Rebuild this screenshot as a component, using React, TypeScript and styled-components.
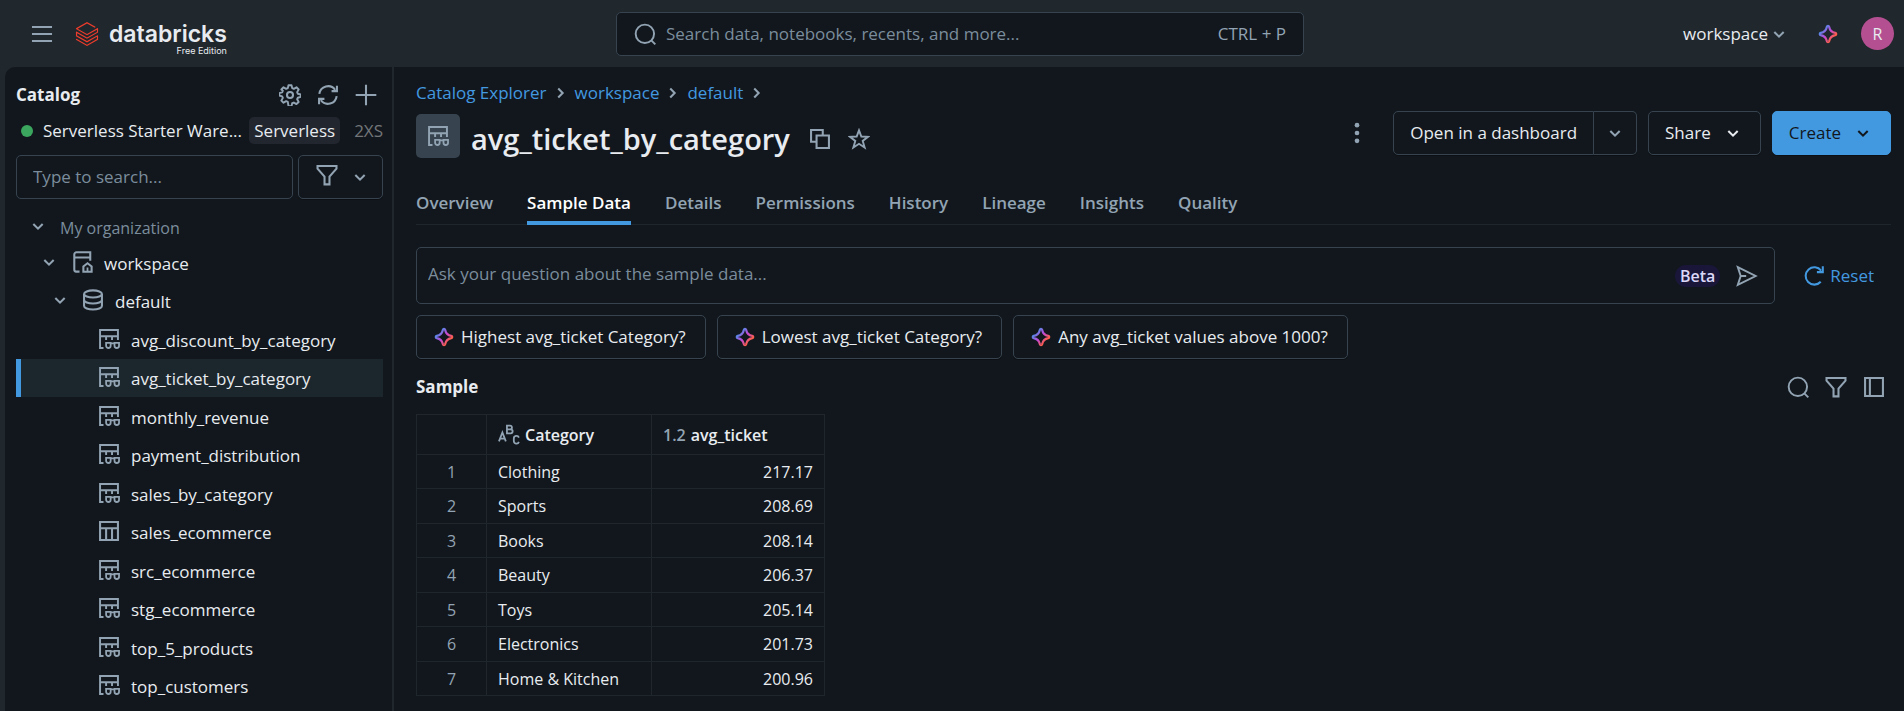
import React from "react";
import styled, { createGlobalStyle, css } from "styled-components";

const color = {
  bar: "#20272d",
  panel: "#12171d",
  line: "#1f272d",
  border: "#37444f",
  text: "#e8ecf0",
  muted: "#92a4b3",
  placeholder: "#7b8d9c",
  blue: "#4299e0",
};

const GlobalStyle = createGlobalStyle`
  *, *::before, *::after { box-sizing: border-box; }
  body {
    margin: 0;
    background: ${color.bar};
    color: ${color.text};
    font-family: "Segoe UI", "Open Sans", "Noto Sans", sans-serif;
    font-size: 17px;
    line-height: 22px;
  }
  button, input { font: inherit; color: inherit; }
  button { cursor: pointer; }
  h1, h2, ul { margin: 0; padding: 0; }
  a { text-decoration: none; }
  svg { display: block; flex: none; }
`;

/* ---------- icons ---------- */

type IconProps = { size?: number; children?: React.ReactNode };

const Icon = ({ size = 22, children }: IconProps) => (
  <svg
    width={size}
    height={size}
    viewBox="0 0 16 16"
    fill="none"
    stroke="currentColor"
    strokeWidth="1.5"
    aria-hidden="true"
  >
    {children}
  </svg>
);

const MenuIcon = () => (
  <Icon>
    <path d="M.7 2.9h14.6M.7 8h14.6M.7 13.1h14.6" />
  </Icon>
);
const SearchIcon = () => (
  <Icon>
    <circle cx="7.9" cy="7.9" r="6.7" strokeWidth="1.4" />
    <path d="m12.6 12.6 2.9 2.9" strokeWidth="1.4" />
  </Icon>
);
const ChevronDown = () => (
  <Icon>
    <path d="m4.6 6.5 3.4 3.4 3.4-3.4" />
  </Icon>
);
const ChevronRight = () => (
  <Icon>
    <path d="M6 4.800 9.200 8l-3.200 3.200" />
  </Icon>
);
const GearIcon = () => (
  <Icon>
    <path
      d="M6.9.9h2.2l.5 2.1 1.2.5 1.9-1.1 1.6 1.6-1.1 1.9.5 1.2 2.1.5v1.8l-2.1.6-.5 1.1 1.1 2-1.6 1.5-1.9-1.1-1.2.5-.5 2.1H6.9L6.4 13l-1.2-.5-1.9 1.1-1.6-1.5 1.1-2-.5-1.1-2.1-.6V6.6l2.1-.5.5-1.2L1.7 4l1.6-1.6 1.9 1.1L6.4 3z"
      strokeWidth="1.4"
      strokeLinejoin="round"
    />
    <circle cx="8" cy="8" r="2.2" />
  </Icon>
);
const RefreshIcon = () => (
  <Icon>
    <path d="M1.7 7.2a6.4 6.4 0 0 1 11.5-3M14.3 8.8a6.4 6.4 0 0 1-11.5 3" />
    <path d="M14.5 1.3v3.9h-3.9M1.5 14.7v-3.9h3.9" />
  </Icon>
);
const PlusIcon = () => (
  <Icon>
    <path d="M8 .5v15M.5 8h15" />
  </Icon>
);
const FilterIcon = () => (
  <Icon>
    <path d="M1.1 1.4h13.8v2L9.8 9.2v5.6H6.2V9.2L1.1 3.4z" />
  </Icon>
);
const CatalogIcon = () => (
  <Icon>
    <path d="M14 7V.9H4a1.6 1.6 0 0 0-1.6 1.6v11.2A1.3 1.3 0 0 0 3.7 15h2.5M2.6 4.7H14" />
    <path d="M9 15.1v-3.9l3-2.3 3 2.3v3.9z" />
    <path d="M12 15v-3" strokeWidth="1.3" />
  </Icon>
);
const DatabaseIcon = () => (
  <Icon>
    <ellipse cx="8" cy="3.6" rx="6.5" ry="2.6" />
    <path d="M1.5 3.6v8.7c0 1.4 2.9 2.6 6.5 2.6s6.5-1.2 6.5-2.6V3.6" />
    <path d="M1.5 8c0 1.4 2.9 2.6 6.5 2.6s6.5-1.2 6.5-2.6" />
  </Icon>
);
const TableIcon = () => (
  <Icon>
    <path d="M1.5 1.5h13v13h-13zM1.5 6h13M5.9 6v8.5M10.2 6v8.5" />
  </Icon>
);
const ViewIcon = () => (
  <Icon>
    <path d="M4 14.5H1.5v-13h13v7.3M1.5 6h13M5.9 6v2.7M10.2 6v2.7" strokeWidth="1.4" />
    <path
      d="M5.9 10.8h3.3v2.1a1.65 1.65 0 0 1-3.3 0zM12 10.8h3.3v2.1a1.65 1.65 0 0 1-3.3 0zM9 11.2h3"
      strokeWidth="1.3"
    />
  </Icon>
);
const CopyIcon = () => (
  <Icon>
    <path d="M5 10H1.5V1.5H10V5M5.5 5.5h9v9h-9z" />
  </Icon>
);
const StarIcon = () => (
  <Icon>
    <path
      d="m8 1.7 1.7 4.5 4.9.2-3.9 3 1.4 4.8L8 11.5l-4.1 2.7 1.4-4.8-3.9-3 4.9-.2z"
      strokeWidth="1.4"
    />
  </Icon>
);
const KebabIcon = () => (
  <Icon>
    <g fill="currentColor" stroke="none">
      <circle cx="8" cy="2.3" r="1.7" />
      <circle cx="8" cy="8" r="1.7" />
      <circle cx="8" cy="13.7" r="1.7" />
    </g>
  </Icon>
);
const SendIcon = () => (
  <Icon>
    <path d="M1.3 1.5 14.3 8l-13 6.5L3.4 8z" strokeWidth="1.4" />
    <path d="M3.4 8h4" />
  </Icon>
);
const ResetIcon = () => (
  <Icon>
    <path d="M12.9 12.2a6.3 6.3 0 1 1 .3-8.1" />
    <path d="M14.4.9v4.3h-4.3" />
  </Icon>
);
const PanelIcon = () => (
  <Icon>
    <path d="M1.5 1.5h13v13h-13zM5 1.5v13" />
  </Icon>
);
const SparkleIcon = () => (
  <Icon>
    <defs>
      <linearGradient id="spark" x1="2" y1="3" x2="13" y2="13" gradientUnits="userSpaceOnUse">
        <stop offset="0.15" stopColor="#4a8fe8" />
        <stop offset="0.5" stopColor="#c048d8" />
        <stop offset="0.85" stopColor="#ff5f46" />
      </linearGradient>
    </defs>
    <path
      stroke="url(#spark)"
      strokeLinejoin="round"
      strokeWidth="1.6"
      d="M8 2c.5 0 .7.3.8.7.5 2.6 1.9 4 4.5 4.5.4.1.7.3.7.8s-.3.7-.7.8c-2.6.5-4 1.9-4.5 4.5-.1.4-.3.7-.8.7s-.7-.3-.8-.7c-.5-2.6-1.9-4-4.5-4.5C2.300 8.700 2 8.500 2 8s.3-.7.7-.8c2.6-.5 4-1.9 4.5-4.5.1-.4.3-.7.8-.7z"
    />
  </Icon>
);
const TextTypeIcon = () => (
  <Icon>
    <g strokeWidth="1.3">
      <path d="m.7 12.6 2.5-6.4 2.5 6.4M1.5 10.7h3.4" />
      <path d="M6.5 1.2h2.3a1.35 1.35 0 0 1 0 2.7H6.5zM6.5 3.9h2.7a1.45 1.45 0 0 1 0 2.9H6.5z" />
      <path d="M15.2 9.9a1.9 1.9 0 0 0-3.7.6v1.9a1.9 1.9 0 0 0 3.7.6" />
    </g>
  </Icon>
);
const BricksLogo = () => (
  <svg width="24" height="24" viewBox="0 0 24 24" fill="#ee3d2c" aria-hidden="true">
    <path d="M.95 14.184 12 20.403l9.919-5.55v2.21L12 22.662l-10.484-5.96-.565.308v.77L12 24l11.05-6.218v-4.317l-.515-.309L12 19.118l-9.867-5.653v-2.21L12 16.805l11.05-6.218V6.32l-.515-.308L12 11.974 2.647 6.681 12 1.388l7.76 4.368.668-.411v-.566L12 0 .95 6.27v.72L12 13.207l9.919-5.55v2.26L12 15.52 1.516 9.56l-.565.308Z" />
  </svg>
);

/* ---------- shared controls ---------- */

const IconButton = styled.button`
  display: flex;
  align-items: center;
  justify-content: center;
  padding: 0;
  border: 0;
  background: none;
  color: ${color.muted};
`;

const Button = styled.button<{ $primary?: boolean }>`
  display: flex;
  align-items: center;
  height: 44px;
  padding: 0 16px;
  border: 1px solid ${color.border};
  border-radius: 5px;
  background: transparent;
  box-shadow: 0 1px 0 rgba(0, 0, 0, 0.3);
  white-space: nowrap;
  ${(p) =>
    p.$primary &&
    css`
      border-color: ${color.blue};
      background: ${color.blue};
      color: ${color.panel};
    `}
`;

const FieldBox = styled.label<{ $height?: number }>`
  display: flex;
  align-items: center;
  min-width: 0;
  height: ${(p) => p.$height ?? 44}px;
  border: 1px solid ${color.border};
  border-radius: 5px;
  background: ${color.panel};
  color: ${color.muted};
`;

const TextInput = styled.input`
  flex: 1;
  min-width: 0;
  padding: 0;
  border: 0;
  outline: 0;
  background: none;
  color: ${color.text};
  &::placeholder {
    color: ${color.placeholder};
    opacity: 1;
  }
`;

/* ---------- top bar ---------- */

const Page = styled.div`
  display: flex;
  flex-direction: column;
  min-height: 100vh;
`;

const TopBar = styled.header`
  display: grid;
  grid-template-columns: 1fr minmax(0, 688px) 1fr;
  align-items: center;
  height: 67px;
  padding: 0 10px 0 26px;
`;

const BarStart = styled.div`
  display: flex;
  align-items: center;
  gap: 17px;
`;

const MenuButton = styled(IconButton)`
  width: 32px;
  height: 34px;
`;

const Brand = styled.a`
  display: flex;
  align-items: center;
  gap: 10px;
  color: ${color.text};
`;

const BrandText = styled.span`
  display: flex;
  flex-direction: column;
  align-items: flex-end;
  padding-top: 13px;
  font-family: Inter, sans-serif;
`;

const BrandName = styled.span`
  font-size: 23px;
  font-weight: 600;
  line-height: 22px;
`;

const BrandEdition = styled.span`
  font-size: 9px;
  line-height: 12px;
`;

const GlobalSearch = styled(FieldBox)`
  gap: 10px;
  padding: 0 17px;
`;

const BarEnd = styled.div`
  display: flex;
  align-items: center;
  justify-content: flex-end;
  gap: 22px;
`;

const WorkspaceButton = styled(IconButton)`
  margin-right: 5px;
  color: ${color.text};
  svg {
    color: ${color.muted};
  }
`;

const Avatar = styled.button`
  width: 33px;
  height: 33px;
  padding: 0;
  border: 0;
  border-radius: 50%;
  background: #b45091;
  font-size: 16px;
`;

/* ---------- sidebar ---------- */

const Body = styled.div`
  display: flex;
  flex: 1;
  gap: 2px;
  padding-left: 5px;
`;

const Sidebar = styled.aside`
  flex: none;
  width: 387px;
  padding: 17px 9px 0 11px;
  border-top-left-radius: 10px;
  background: ${color.panel};
`;

const SidebarHeader = styled.div`
  display: flex;
  align-items: center;
  justify-content: space-between;
  padding-right: 6px;
`;

const Heading = styled.h2`
  font-size: 17px;
  font-weight: 700;
  line-height: 22px;
`;

const Tools = styled.div`
  display: flex;
  gap: 16px;
`;

const Warehouse = styled.div`
  display: flex;
  align-items: center;
  gap: 10px;
  margin: 11px 0;
  padding-left: 5px;
  line-height: 27px;
  white-space: nowrap;
`;

const StatusDot = styled.span`
  flex: none;
  width: 12px;
  height: 12px;
  border-radius: 50%;
  background: #3ba65e;
`;

const WarehouseName = styled.span`
  flex: 1;
  min-width: 0;
`;

const Tag = styled.span`
  margin-right: 4px;
  padding: 0 5px;
  border-radius: 5px;
  background: #22272f;
`;

const Size = styled.span`
  color: #737679;
`;

const SearchRow = styled.div`
  display: flex;
  gap: 5px;
`;

const TreeSearch = styled(FieldBox)`
  flex: 1;
  padding: 0 16px;
`;

const FilterButton = styled(Button)`
  justify-content: center;
  gap: 11px;
  width: 85px;
  padding: 0 0 0 5px;
  color: ${color.muted};
  svg:first-child {
    margin-bottom: 5px;
  }
`;

const Tree = styled.ul`
  margin-top: 12px;
  list-style: none;
`;

const TreeRow = styled.button<{ $indent: number; $selected?: boolean; $root?: boolean }>`
  display: flex;
  align-items: center;
  gap: 11px;
  width: 100%;
  height: ${(p) => (p.$root ? 34 : 38)}px;
  padding: 0 0 0 ${(p) => p.$indent}px;
  border: 0;
  background: ${(p) => (p.$selected ? "#1c262d" : "none")};
  box-shadow: ${(p) => (p.$selected ? `inset 5px 0 ${color.blue}` : "none")};
  color: ${(p) => (p.$root ? color.placeholder : color.text)};
  font-size: ${(p) => (p.$root ? 16 : 17)}px;
  text-align: left;
  svg {
    margin-bottom: 4px;
    color: ${color.muted};
  }
`;

const Leaves = styled.ul`
  list-style: none;
  li:nth-child(odd):not(:first-child) {
    margin-top: 1px;
  }
  ${TreeRow} {
    padding-top: 2px;
  }
`;

/* ---------- main panel ---------- */

const Main = styled.main`
  flex: 1;
  min-width: 0;
  padding: 15px 13px 16px 22px;
  background: ${color.panel};
`;

const Breadcrumbs = styled.nav`
  display: flex;
  align-items: center;
  a {
    color: ${color.blue};
  }
  svg {
    margin: 0 3px;
    color: ${color.muted};
  }
`;

const TitleBar = styled.div`
  display: flex;
  align-items: flex-start;
  justify-content: space-between;
  margin-top: 7px;
`;

const TitleGroup = styled.div`
  display: flex;
  align-items: center;
  gap: 11px;
  height: 52px;
  padding-top: 3px;
`;

const TitleBadge = styled.span`
  display: flex;
  align-items: center;
  align-self: flex-start;
  justify-content: center;
  width: 44px;
  height: 44px;
  border-radius: 5px;
  background: ${color.border};
  color: ${color.muted};
`;

const Title = styled.h1`
  font-size: 29px;
  font-weight: 600;
  line-height: 40px;
`;

const TitleTools = styled.div`
  display: flex;
  gap: 17px;
  margin-left: 8px;
`;

const Actions = styled.div`
  display: flex;
  align-items: center;
  gap: 11px;
`;

const Kebab = styled(IconButton)`
  margin-right: 14px;
`;

const Split = styled.div`
  display: flex;
  ${Button}:first-child {
    border-radius: 5px 0 0 5px;
  }
  ${Button}:last-child {
    width: 43px;
    padding: 0;
    justify-content: center;
    border-left: 0;
    border-radius: 0 5px 5px 0;
    color: ${color.muted};
  }
`;

const MenuAction = styled(Button)`
  gap: 11px;
`;

const Tabs = styled.nav`
  display: flex;
  gap: 34px;
  margin-top: 19px;
  border-bottom: 1px solid ${color.line};
`;

const Tab = styled.a<{ $active?: boolean }>`
  padding: 10px 0 7px;
  margin-bottom: -1px;
  border-bottom: 4px solid ${(p) => (p.$active ? color.blue : "transparent")};
  color: ${(p) => (p.$active ? "#ffffff" : color.muted)};
  font-weight: 600;
`;

const AskRow = styled.form`
  display: flex;
  align-items: center;
  gap: 28px;
  margin-top: 22px;
  padding-right: 17px;
`;

const AskBox = styled(FieldBox)`
  flex: 1;
  padding: 0 16px 0 11px;
  ${TextInput} {
    padding-bottom: 3px;
  }
`;

const Beta = styled.span`
  margin-right: 16px;
  padding: 0 5px;
  border-radius: 11px;
  background: #1a163a;
  color: #dcd8f8;
  font-size: 16px;
  font-weight: 600;
`;

const ResetButton = styled(IconButton)`
  gap: 5px;
  color: ${color.blue};
`;

const Suggestions = styled.div`
  display: flex;
  gap: 11px;
  margin-top: 11px;
`;

const Suggestion = styled(Button)`
  gap: 6px;
  padding: 0 19px 0 16px;
`;

const SampleHeader = styled.div`
  display: flex;
  align-items: center;
  justify-content: space-between;
  margin-top: 17px;
  padding-right: 6px;
`;

const Table = styled.table`
  margin-top: 16px;
  border-collapse: collapse;
  font-size: 16px;
  th,
  td {
    height: 34px;
    padding: 0 11px;
    border: 1px solid ${color.line};
    text-align: left;
    font-weight: 400;
  }
  thead th {
    height: 40px;
    font-weight: 600;
  }
  tbody tr:nth-child(even) > * {
    height: 35px;
  }
  tbody th {
    color: ${color.muted};
    text-align: center;
  }
  td:last-child {
    text-align: right;
  }
`;

const Column = styled.col<{ $width: number }>`
  width: ${(p) => p.$width}px;
`;

const ColumnHead = styled.span`
  display: flex;
  align-items: center;
  gap: 5px;
  svg {
    color: ${color.muted};
  }
`;

const NumberType = styled.span`
  color: ${color.muted};
`;

/* ---------- data ---------- */

const tables = [
  "avg_discount_by_category",
  "avg_ticket_by_category",
  "monthly_revenue",
  "payment_distribution",
  "sales_by_category",
  "sales_ecommerce",
  "src_ecommerce",
  "stg_ecommerce",
  "top_5_products",
  "top_customers",
];
const selectedTable = "avg_ticket_by_category";

const tabs = ["Overview", "Sample Data", "Details", "Permissions", "History", "Lineage", "Insights", "Quality"];

const suggestions = [
  "Highest avg_ticket Category?",
  "Lowest avg_ticket Category?",
  "Any avg_ticket values above 1000?",
];

const rows: [string, string][] = [
  ["Clothing", "217.17"],
  ["Sports", "208.69"],
  ["Books", "208.14"],
  ["Beauty", "206.37"],
  ["Toys", "205.14"],
  ["Electronics", "201.73"],
  ["Home & Kitchen", "200.96"],
];

export default function App() {
  return (
    <Page>
      <GlobalStyle />
      <TopBar>
        <BarStart>
          <MenuButton aria-label="Menu">
            <MenuIcon />
          </MenuButton>
          <Brand href="#">
            <BricksLogo />
            <BrandText>
              <BrandName>databricks</BrandName>
              <BrandEdition>Free Edition</BrandEdition>
            </BrandText>
          </Brand>
        </BarStart>
        <GlobalSearch>
          <SearchIcon />
          <TextInput aria-label="Search" placeholder="Search data, notebooks, recents, and more..." />
          <span>CTRL + P</span>
        </GlobalSearch>
        <BarEnd>
          <WorkspaceButton>
            workspace
            <ChevronDown />
          </WorkspaceButton>
          <IconButton aria-label="Assistant">
            <SparkleIcon />
          </IconButton>
          <Avatar aria-label="Account R">R</Avatar>
        </BarEnd>
      </TopBar>

      <Body>
        <Sidebar>
          <SidebarHeader>
            <Heading>Catalog</Heading>
            <Tools>
              <IconButton aria-label="Settings">
                <GearIcon />
              </IconButton>
              <IconButton aria-label="Refresh">
                <RefreshIcon />
              </IconButton>
              <IconButton aria-label="Add">
                <PlusIcon />
              </IconButton>
            </Tools>
          </SidebarHeader>
          <Warehouse>
            <StatusDot />
            <WarehouseName>Serverless Starter Ware...</WarehouseName>
            <Tag>Serverless</Tag>
            <Size>2XS</Size>
          </Warehouse>
          <SearchRow>
            <TreeSearch>
              <TextInput aria-label="Search catalog" placeholder="Type to search..." />
            </TreeSearch>
            <FilterButton aria-label="Filter">
              <FilterIcon />
              <ChevronDown />
            </FilterButton>
          </SearchRow>
          <Tree>
            <li>
              <TreeRow $indent={11} $root>
                <ChevronDown />
                My organization
              </TreeRow>
            </li>
            <li>
              <TreeRow $indent={22}>
                <ChevronDown />
                <CatalogIcon />
                workspace
              </TreeRow>
            </li>
            <li>
              <TreeRow $indent={33}>
                <ChevronDown />
                <DatabaseIcon />
                default
              </TreeRow>
              <Leaves>
                {tables.map((name) => (
                  <li key={name}>
                    <TreeRow $indent={82} $selected={name === selectedTable}>
                      {name === "sales_ecommerce" ? <TableIcon /> : <ViewIcon />}
                      {name}
                    </TreeRow>
                  </li>
                ))}
              </Leaves>
            </li>
          </Tree>
        </Sidebar>

        <Main>
          <Breadcrumbs aria-label="Breadcrumb">
            {["Catalog Explorer", "workspace", "default"].map((crumb) => (
              <React.Fragment key={crumb}>
                <a href="#">{crumb}</a>
                <ChevronRight />
              </React.Fragment>
            ))}
          </Breadcrumbs>
          <TitleBar>
            <TitleGroup>
              <TitleBadge>
                <ViewIcon />
              </TitleBadge>
              <Title>avg_ticket_by_category</Title>
              <TitleTools>
                <IconButton aria-label="Copy name">
                  <CopyIcon />
                </IconButton>
                <IconButton aria-label="Favorite">
                  <StarIcon />
                </IconButton>
              </TitleTools>
            </TitleGroup>
            <Actions>
              <Kebab aria-label="More">
                <KebabIcon />
              </Kebab>
              <Split>
                <Button>Open in a dashboard</Button>
                <Button aria-label="More open options">
                  <ChevronDown />
                </Button>
              </Split>
              <MenuAction>
                Share
                <ChevronDown />
              </MenuAction>
              <MenuAction $primary>
                Create
                <ChevronDown />
              </MenuAction>
            </Actions>
          </TitleBar>

          <Tabs>
            {tabs.map((tab) => (
              <Tab key={tab} href="#" $active={tab === "Sample Data"}>
                {tab}
              </Tab>
            ))}
          </Tabs>

          <AskRow onSubmit={(e) => e.preventDefault()}>
            <AskBox $height={57}>
              <TextInput aria-label="Question" placeholder="Ask your question about the sample data..." />
              <Beta>Beta</Beta>
              <IconButton aria-label="Send">
                <SendIcon />
              </IconButton>
            </AskBox>
            <ResetButton type="reset">
              <ResetIcon />
              Reset
            </ResetButton>
          </AskRow>

          <Suggestions>
            {suggestions.map((text) => (
              <Suggestion key={text}>
                <SparkleIcon />
                {text}
              </Suggestion>
            ))}
          </Suggestions>

          <SampleHeader>
            <Heading>Sample</Heading>
            <Tools>
              <IconButton aria-label="Search rows">
                <SearchIcon />
              </IconButton>
              <IconButton aria-label="Filter rows">
                <FilterIcon />
              </IconButton>
              <IconButton aria-label="Toggle columns">
                <PanelIcon />
              </IconButton>
            </Tools>
          </SampleHeader>

          <Table>
            <colgroup>
              <Column $width={70} />
              <Column $width={165} />
              <Column $width={173} />
            </colgroup>
            <thead>
              <tr>
                <th aria-label="Row" />
                <th>
                  <ColumnHead>
                    <TextTypeIcon />
                    Category
                  </ColumnHead>
                </th>
                <th>
                  <ColumnHead>
                    <NumberType>1.2</NumberType>
                    avg_ticket
                  </ColumnHead>
                </th>
              </tr>
            </thead>
            <tbody>
              {rows.map(([category, value], i) => (
                <tr key={category}>
                  <th scope="row">{i + 1}</th>
                  <td>{category}</td>
                  <td>{value}</td>
                </tr>
              ))}
            </tbody>
          </Table>
        </Main>
      </Body>
    </Page>
  );
}
